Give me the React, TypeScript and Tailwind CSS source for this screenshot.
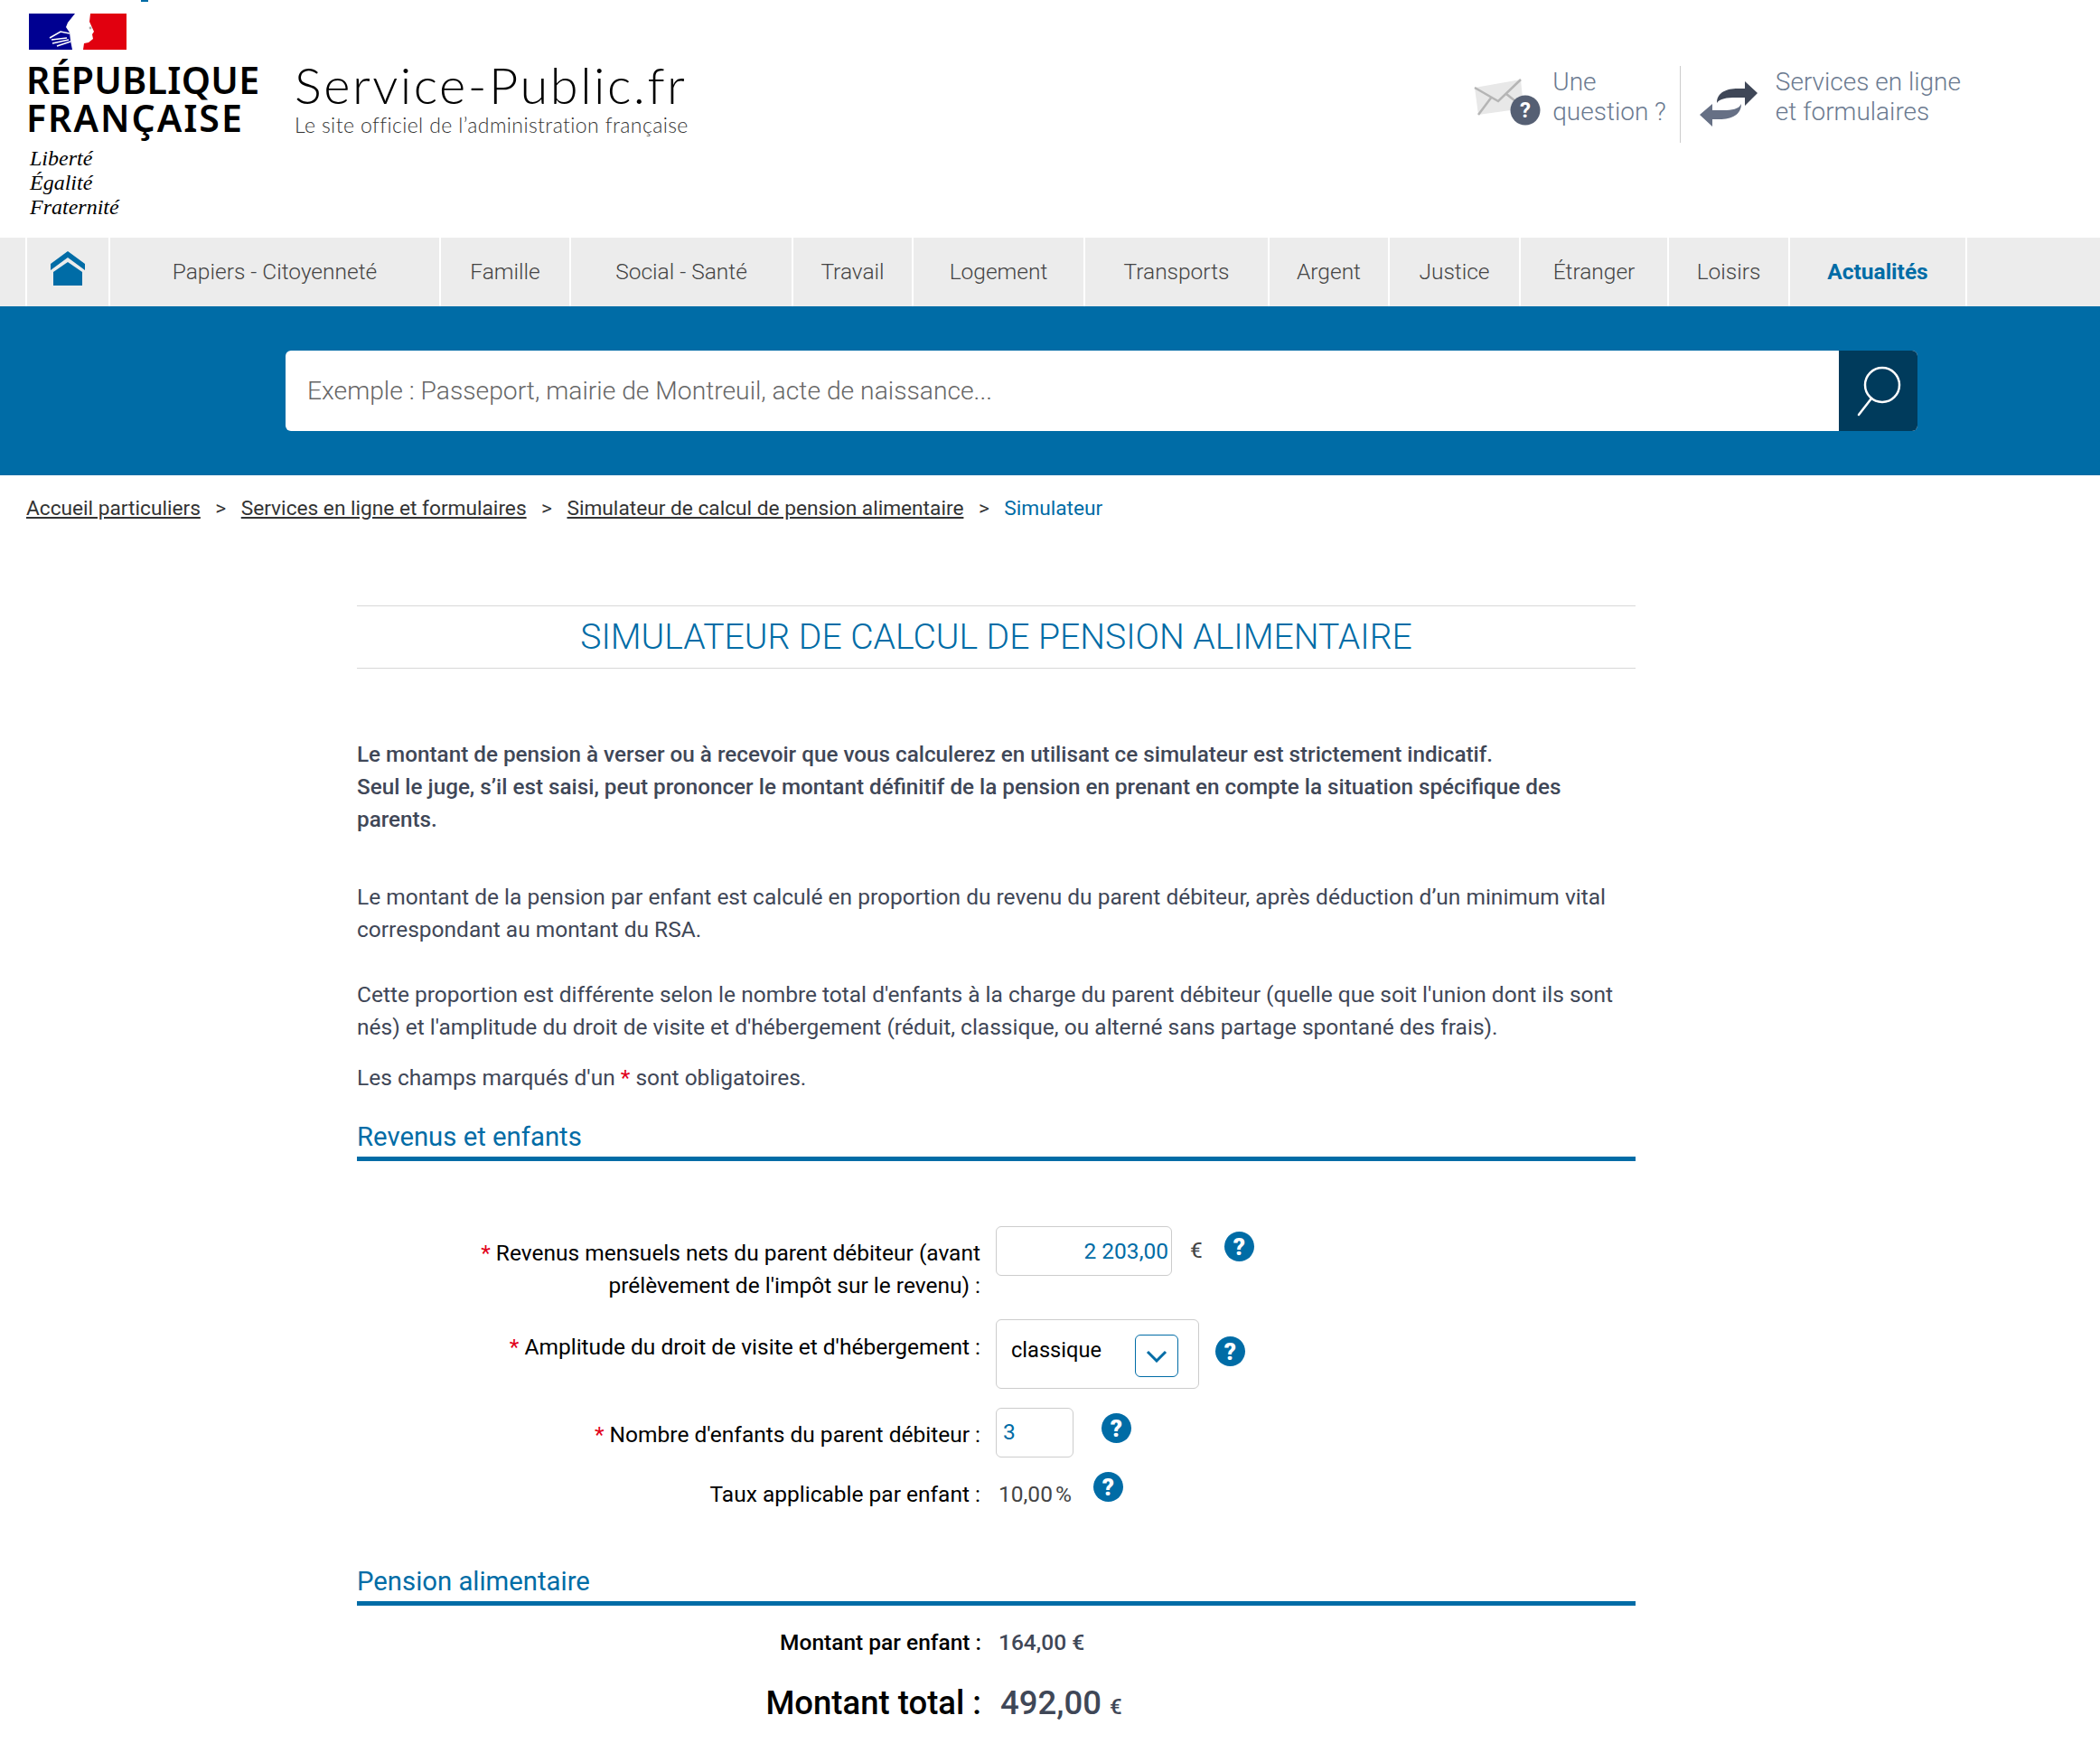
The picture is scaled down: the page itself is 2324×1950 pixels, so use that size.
import React from 'react';

const navItems = [
  { label: 'Papiers - Citoyenneté', w: 'w-[366px]' },
  { label: 'Famille', w: 'w-[144px]' },
  { label: 'Social - Santé', w: 'w-[246px]' },
  { label: 'Travail', w: 'w-[133px]' },
  { label: 'Logement', w: 'w-[190px]' },
  { label: 'Transports', w: 'w-[204px]' },
  { label: 'Argent', w: 'w-[133px]' },
  { label: 'Justice', w: 'w-[145px]' },
  { label: 'Étranger', w: 'w-[164px]' },
  { label: 'Loisirs', w: 'w-[134px]' },
];

const HelpIcon = ({ className }: { className: string }) => (
  <span className={`flex h-[33px] w-[33px] shrink-0 items-center justify-center rounded-full bg-[#006ca6] text-[26px] font-black leading-none text-white ${className}`}>
    ?
  </span>
);

const Star = () => <span className="text-[#e2001a]">* </span>;

const SectionTitle = ({ children, className }: { children: React.ReactNode; className: string }) => (
  <h2 className={`h-[49px] border-b-[5px] border-[#006ca6] text-[29.3px] leading-[44px] text-[#006ca6] ${className}`}>
    {children}
  </h2>
);

const Logo = () => (
  <div className="w-[280px] shrink-0 pl-[30px] pt-[15px]">
    <svg width="108" height="40" viewBox="0 0 108 40" className="ml-[2px] block">
      <path d="M0 0 L51 0 L43 10 L41 15 L45 21 L46 30 L48 40 L0 40 Z" fill="#000091" />
      <path d="M68 0 L108 0 L108 40 L60 40 L61 33 L66 32 L71 28 L70 23 L72 20 L67 9 Z" fill="#e1000f" />
      <path d="M23 27 L35 20 L45 22 M25 29 L42 27 M26 33 L44 29 M31 36 L46 31" stroke="#fff" strokeWidth="1.6" fill="none" />
      <circle cx="68" cy="16" r="1.4" fill="#aaa" />
    </svg>
    <div className="ml-[-1px] mt-[12px] font-['Noto_Sans',sans-serif] text-[41px] font-semibold leading-[42px] text-black">
      <span className="tracking-[0.3px]">RÉPUBLIQUE</span>
      <br />
      <span className="tracking-[2px]">FRANÇAISE</span>
    </div>
    <div className="ml-[3px] mt-[11px] font-['Liberation_Serif',serif] text-[24px] italic leading-[27px] text-black">
      Liberté
      <br />
      Égalité
      <br />
      Fraternité
    </div>
  </div>
);

const EnvelopeIcon = () => (
  <svg width="74" height="52" viewBox="0 0 74 52" className="block">
    <path d="M1 10 L52 1 L55 33 L5 40 Z" fill="#e8e8e8" />
    <path d="M1 10 L27 25 L52 1 M5 40 L20 20 M36 17 L55 32" stroke="#b5b5b5" strokeWidth="2.5" fill="none" />
    <circle cx="57" cy="35" r="16.5" fill="#555f73" />
    <text x="57" y="43" textAnchor="middle" fontSize="24" fontWeight="700" fill="#fff" fontFamily="Roboto, sans-serif">?</text>
  </svg>
);

const SwapIcon = () => (
  <svg width="64" height="50" viewBox="0 0 64 50" className="block">
    <path d="M19 24 C19 12 30 8 42 8 L50 8 L50 0 L64 13 L50 27 L50 18 L40 18 C30 18 22 19 19 24Z" fill="#3f4757" />
    <path d="M46 25 C46 37 35 42 22 42 L14 42 L14 50 L0 37 L14 25 L14 32 L26 32 C36 32 43 31 46 25Z" fill="#667085" />
  </svg>
);

const App: React.FC = () => {
  return (
    <div className="relative h-[1950px] w-[2324px] overflow-hidden bg-white font-['Roboto',sans-serif] text-[24.5px] leading-[36px] text-[#3f4757]">
      <span className="absolute left-[156px] top-0 h-[2px] w-[8px] bg-[#006ca6]" />

      {/* Header */}
      <header className="flex h-[263px]">
        <Logo />
        <div className="ml-[46px] w-[480px] shrink-0 whitespace-nowrap pt-[58px] font-['Lato',sans-serif] font-light text-black">
          <div className="text-[56px] leading-[72px] tracking-[2.5px]">Service-Public.fr</div>
          <div className="mt-[-7px] text-[23px] leading-[30px] tracking-[0.4px] text-[#333]">Le site officiel de l’administration française</div>
        </div>
        <div className="ml-auto flex whitespace-nowrap pr-[154px] pt-[73px] text-[28px] font-light leading-[33px] text-[#6b7a90]">
          <div className="flex h-[85px] border-r border-[#ccc] pr-[15px]">
            <div className="pt-[14px]"><EnvelopeIcon /></div>
            <div className="ml-[13px] pt-[1px]">Une<br />question ?</div>
          </div>
          <div className="ml-[21px] pt-[17px]"><SwapIcon /></div>
          <div className="ml-[20px] pt-[1px]">Services en ligne<br />et formulaires</div>
        </div>
      </header>

      {/* Nav */}
      <nav className="flex h-[76px] bg-[#ececec] font-light leading-[75px] text-[#444]">
        <div className="w-[30px] border-r-2 border-white" />
        <div className="flex w-[92px] justify-center border-r-2 border-white pt-[15px]">
          <svg width="38" height="38" viewBox="0 0 38 38" className="block">
            <path d="M19 0 L38 14 L38 21 L19 7 L0 21 L0 14 Z" fill="#006ca6" />
            <path d="M19 12 L35 23 L35 38 L3 38 L3 23 Z" fill="#006ca6" />
          </svg>
        </div>
        {navItems.map((item) => (
          <div key={item.label} className={`${item.w} border-r-2 border-white text-center`}>
            {item.label}
          </div>
        ))}
        <div className="w-[196px] border-r-2 border-white text-center font-bold text-[#006ca6]">Actualités</div>
      </nav>

      {/* Search */}
      <div className="h-[187px] bg-[#006ca6] pl-[316px] pt-[49px]">
        <div className="flex h-[89px] w-[1806px] overflow-hidden rounded-[6px] bg-white">
          <div className="flex-1 pl-[24px] text-[28.25px] font-light leading-[89px] text-[#666]">
            Exemple : Passeport, mairie de Montreuil, acte de naissance...
          </div>
          <div className="flex w-[87px] items-center justify-center bg-[#003b5c]">
            <svg width="50" height="56" viewBox="0 0 50 56" fill="none" stroke="#fff" strokeWidth="2.5">
              <circle cx="29" cy="21" r="19" />
              <path d="M17 36 L3 54" strokeLinecap="round" />
            </svg>
          </div>
        </div>
      </div>

      {/* Breadcrumb */}
      <div className="flex h-[144px] pl-[29px] pt-[19px] text-[22.7px] text-[#333]">
        <a className="underline">Accueil particuliers</a>
        <span className="mx-[16.5px]">&gt;</span>
        <a className="underline">Services en ligne et formulaires</a>
        <span className="mx-[16.5px]">&gt;</span>
        <a className="underline">Simulateur de calcul de pension alimentaire</a>
        <span className="mx-[16.5px]">&gt;</span>
        <span className="text-[#006ca6]">Simulateur</span>
      </div>

      {/* Main */}
      <main className="ml-[395px] w-[1415px]">
        <h1 className="h-[70px] border-y border-[#d8d8d8] text-center text-[39.1px] font-light uppercase leading-[68px] text-[#006ca6]">
          Simulateur de calcul de pension alimentaire
        </h1>

        <p className="mt-[77px] text-[24.25px] font-medium">
          Le montant de pension à verser ou à recevoir que vous calculerez en utilisant ce simulateur est strictement indicatif.
          <br />
          Seul le juge, s’il est saisi, peut prononcer le montant définitif de la pension en prenant en compte la situation spécifique des parents.
        </p>
        <p className="mt-[50px]">
          Le montant de la pension par enfant est calculé en proportion du revenu du parent débiteur, après déduction d’un minimum vital correspondant au montant du RSA.
        </p>
        <p className="mt-[36px]">
          Cette proportion est différente selon le nombre total d'enfants à la charge du parent débiteur (quelle que soit l'union dont ils sont nés) et l'amplitude du droit de visite et d'hébergement (réduit, classique, ou alterné sans partage spontané des frais).
        </p>
        <p className="mt-[20px]">
          Les champs marqués d'un <span className="text-[#e2001a]">*</span> sont obligatoires.
        </p>

        <SectionTitle className="mt-[25px]">Revenus et enfants</SectionTitle>

        {/* Form */}
        <div className="mt-[72px] flex items-start text-black">
          <label className="ml-[90px] mt-[12px] w-[600px] text-right"><Star />Revenus mensuels nets du parent débiteur (avant prélèvement de l'impôt sur le revenu) :</label>
          <div className="ml-[17px] flex h-[55px] w-[195px] items-center justify-end rounded-[6px] border border-[#ccc] pr-[3px] text-[#006ca6]">2 203,00</div>
          <span className="ml-[20px] mt-[9px] text-[#444]">€</span>
          <HelpIcon className="ml-[24px] mt-[6px]" />
        </div>
        <div className="mt-[19px] flex items-start text-black">
          <label className="ml-[90px] mt-[13px] w-[600px] text-right"><Star />Amplitude du droit de visite et d'hébergement :</label>
          <div className="relative ml-[17px] h-[77px] w-[225px] rounded-[6px] border border-[#ccc] pl-[16px] pt-[15px] text-[23.6px]">
            classique
            <span className="absolute right-[22px] top-[16px] flex h-[47px] w-[48px] items-center justify-center rounded-[6px] border border-[#006ca6]">
              <svg width="24" height="14" viewBox="0 0 24 14" fill="none" stroke="#006ca6" strokeWidth="3"><path d="M2 2 L12 12 L22 2" /></svg>
            </span>
          </div>
          <HelpIcon className="ml-[18px] mt-[19px]" />
        </div>
        <div className="mt-[21px] flex items-start text-black">
          <label className="ml-[90px] mt-[12px] w-[600px] text-right"><Star />Nombre d'enfants du parent débiteur :</label>
          <div className="ml-[17px] h-[55px] w-[86px] rounded-[6px] border border-[#ccc] pl-[7px] pt-[8px] text-[#006ca6]">3</div>
          <HelpIcon className="ml-[31px] mt-[6px]" />
        </div>
        <div className="mt-[16px] flex items-start text-black">
          <label className="ml-[90px] mt-[7px] w-[600px] text-right">Taux applicable par enfant :</label>
          <span className="ml-[20px] mt-[7px] text-[#444]">10,00{'\u202f'}%</span>
          <HelpIcon className="ml-[24px]" />
        </div>

        <SectionTitle className="mt-[56px]">Pension alimentaire</SectionTitle>

        <div className="mt-[23px] flex font-medium">
          <span className="w-[691px] text-right text-black">Montant par enfant :</span>
          <span className="ml-[19px] text-[#3f4757]">164,00 €</span>
        </div>
        <div className="mt-[24px] flex items-baseline font-medium">
          <span className="w-[691px] text-right text-[36.5px] leading-[50px] text-black">Montant total :</span>
          <span className="ml-[21px] text-[36.5px] leading-[50px] text-[#3f4757]">492,00</span>
          <span className="ml-[9px] text-[24px] text-[#3f4757]">€</span>
        </div>
      </main>
    </div>
  );
};

export default App;
